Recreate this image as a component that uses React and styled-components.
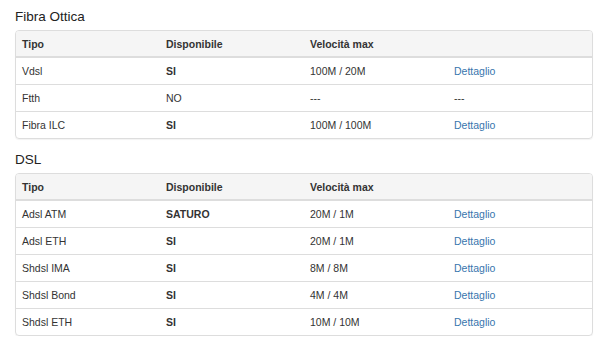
import React from "react";
import styled, { createGlobalStyle } from "styled-components";

const Global = createGlobalStyle`
  html, body { margin: 0; padding: 0; background: #fff; }
  body {
    font-family: "Liberation Sans", Arial, Helvetica, sans-serif;
    font-size: 10.5px;
    color: #333;
  }
`;

const Page = styled.div`
  width: 578px;
  padding: 0 0 0 15px;
`;

const Section = styled.section`
  margin-top: ${(p) => (p.$first ? "8px" : "12px")};
`;

const Title = styled.h3`
  margin: 0 0 5px 0;
  font-size: 13.5px;
  line-height: 17px;
  font-weight: normal;
  color: #222;
`;

const Panel = styled.div`
  border: 1px solid #ddd;
  border-radius: 4px;
  box-shadow: 0 1px 1px rgba(0, 0, 0, 0.05);
  overflow: hidden;
`;

const Table = styled.table`
  width: 100%;
  border-collapse: collapse;
  table-layout: fixed;
`;

const HeadCell = styled.th`
  text-align: left;
  font-weight: bold;
  height: 25px;
  padding: 0 6px;
  background: #f5f5f5;
  border-bottom: 2px solid #ddd;
  color: #333;
`;

const Row = styled.tr`
  & + & td { border-top: 1px solid #ddd; }
`;

const Cell = styled.td`
  height: 26px;
  padding: 0 6px;
  font-weight: ${(p) => (p.$bold ? "bold" : "normal")};
`;

const Link = styled.a`
  color: #3775ad;
  text-decoration: none;
`;

const fibra = [
  ["Vdsl", "SI", "100M / 20M", true],
  ["Ftth", "NO", "---", false],
  ["Fibra ILC", "SI", "100M / 100M", true],
];

const dsl = [
  ["Adsl ATM", "SATURO", "20M / 1M", true],
  ["Adsl ETH", "SI", "20M / 1M", true],
  ["Shdsl IMA", "SI", "8M / 8M", true],
  ["Shdsl Bond", "SI", "4M / 4M", true],
  ["Shdsl ETH", "SI", "10M / 10M", true],
];

function DataTable({ rows }) {
  return (
    <Panel>
      <Table>
        <thead>
          <tr>
            <HeadCell>Tipo</HeadCell>
            <HeadCell>Disponibile</HeadCell>
            <HeadCell>Velocità max</HeadCell>
            <HeadCell></HeadCell>
          </tr>
        </thead>
        <tbody>
          {rows.map(([tipo, disp, vel, link]) => (
            <Row key={tipo}>
              <Cell>{tipo}</Cell>
              <Cell $bold={disp !== "NO"}>{disp}</Cell>
              <Cell>{vel}</Cell>
              <Cell>{link ? <Link href="#">Dettaglio</Link> : "---"}</Cell>
            </Row>
          ))}
        </tbody>
      </Table>
    </Panel>
  );
}

export default function App() {
  return (
    <>
      <Global />
      <Page>
        <Section $first>
          <Title>Fibra Ottica</Title>
          <DataTable rows={fibra} />
        </Section>
        <Section>
          <Title>DSL</Title>
          <DataTable rows={dsl} />
        </Section>
      </Page>
    </>
  );
}
